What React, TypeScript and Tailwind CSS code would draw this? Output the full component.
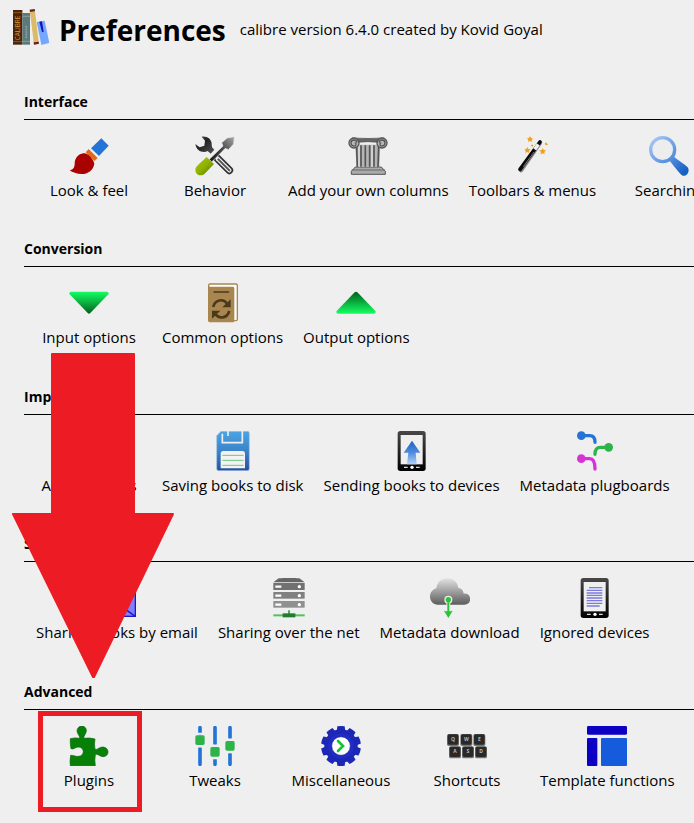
import type { ReactNode } from "react";

function Icon({ children }: { children: ReactNode }) {
  return (
    <svg viewBox="0 0 120 120" className="size-10 shrink-0" aria-hidden="true">
      {children}
    </svg>
  );
}

const lookIcon = (
  <Icon>
    <path d="M97 7 119 29 90 60 66 37Z" fill="#2474d8" />
    <path d="M59 39 86 66 76 75 50 49Z" fill="#e2691c" />
    <path d="M43 52C54 48 73 68 76 83C73 103 56 114 38 114C24 114 10 109 2 103C13 100 16 96 17 84C17 66 29 54 43 52Z" fill="#a90000" />
  </Icon>
);

const behaviorIcon = (
  <Icon>
    <defs>
      <linearGradient id="wrench" x1="0" y1="0" x2="1" y2="1">
        <stop offset="0" stopColor="#666" />
        <stop offset=".4" stopColor="#222" />
        <stop offset="1" stopColor="#555" />
      </linearGradient>
      <linearGradient id="blade" x1="1" y1="0" x2="0" y2="1">
        <stop offset="0" stopColor="#aaa" />
        <stop offset=".5" stopColor="#444" />
        <stop offset="1" stopColor="#111" />
      </linearGradient>
      <linearGradient id="grip" x1="0" y1="0" x2="1" y2="1">
        <stop offset="0" stopColor="#a3cc00" />
        <stop offset=".5" stopColor="#8fb200" />
        <stop offset="1" stopColor="#586f00" />
      </linearGradient>
    </defs>
    <path d="M20 2C36-1 51 10 50 25L51 34L58 41L47 53L38 45C26 52 4 47 1 24L14 34L28 29L30 14Z" fill="url(#wrench)" />
    <path d="M66 66 103 103" stroke="#333" strokeWidth="23" strokeLinecap="round" />
    <path d="M68 68 103 103" stroke="#efefef" strokeWidth="13" strokeLinecap="round" />
    <path d="M70 70 103 103" stroke="#555" strokeWidth="6" strokeLinecap="round" />
    <path d="M43 70 84 30 80 20 96 6 118 2 116 24 100 41 91 37 50 78Z" fill="url(#blade)" stroke="#efefef" strokeWidth="2" />
    <path d="M35 63 57 84 29 113C18 123-3 117 2 96C4 91 20 77 35 63Z" fill="url(#grip)" />
  </Icon>
);

const columnIcon = (
  <Icon>
    <path d="M10 106 22 93H100L112 106V115H10Z" fill="#aaa" stroke="#555" strokeWidth="3" />
    <path d="M11 102H111" stroke="#666" strokeWidth="3" />
    <path d="M21 26H97L94 93H26Z" fill="#b5b5b5" />
    <path d="M26 30 28 93M39 28V92M52 28V92M65 28V92M78 28V92M92 30 90 93" stroke="#555" strokeWidth="5" />
    <path d="M33 28V92M72 28V92" stroke="#eee" strokeWidth="3" />
    <path d="M12 6Q60 9 109 6L106 20Q60 14 13 20Z" fill="#666" stroke="#444" strokeWidth="2" />
    <circle cx="18" cy="21" r="15" fill="#bbb" stroke="#555" strokeWidth="4" />
    <circle cx="102" cy="21" r="15" fill="#bbb" stroke="#555" strokeWidth="4" />
    <path d="M27 20A9 9 0 1 0 18 30A5 5 0 0 0 20 20M93 20A9 9 0 1 1 102 30A5 5 0 0 1 100 20" fill="none" stroke="#555" strokeWidth="4" />
  </Icon>
);

const wandIcon = (
  <Icon>
    <path d="M27 103 84 20" stroke="#888" strokeWidth="13" strokeLinecap="round" />
    <path d="M24 100 84 18" stroke="#0a0a0a" strokeWidth="11" strokeLinecap="round" />
    <path d="M68 40 79 25" stroke="#eee" strokeWidth="11" />
    <path d="M34 92 66 48" stroke="#777" strokeWidth="3" />
    <g fill="#f0a020">
      <path d="M54 0 57 6 63 7 59 12 60 18 54 15 48 18 49 12 45 7 51 6Z" />
      <path d="M46 33 49 39 56 40 51 45 52 51 46 48 40 51 41 45 37 40 43 39Z" />
      <path d="M92 36 95 42 102 43 97 48 98 55 92 52 85 55 87 48 82 43 89 42Z" />
      <path d="M103 19 105 23 108 25 104 28 101 27 98 23Z" />
      <path d="M61 25 64 29 61 32 56 29Z" />
    </g>
  </Icon>
);

const searchIcon = (
  <Icon>
    <defs>
      <linearGradient id="lens" gradientUnits="userSpaceOnUse" x1="10" y1="10" x2="105" y2="110">
        <stop offset="0" stopColor="#a5c5f4" />
        <stop offset=".5" stopColor="#5f97e2" />
        <stop offset="1" stopColor="#1560c4" />
      </linearGradient>
    </defs>
    <path d="M62 75 75 62C88 73 104 82 116 94C124 106 114 121 101 119C94 116 76 91 62 75Z" fill="url(#lens)" />
    <circle cx="41" cy="41" r="36" fill="#ededed" stroke="url(#lens)" strokeWidth="10" />
  </Icon>
);

const inputIcon = (
  <Icon>
    <defs>
      <linearGradient id="down" x1="0" y1="0" x2="0" y2="1">
        <stop offset="0" stopColor="#14ff62" />
        <stop offset="1" stopColor="#00601c" />
      </linearGradient>
    </defs>
    <path d="M5 26H115Q121 29 118 34L64 90Q60 94 56 90L2 34Q-1 29 5 26Z" fill="url(#down)" />
  </Icon>
);

const outputIcon = (
  <Icon>
    <defs>
      <linearGradient id="up" x1="0" y1="0" x2="0" y2="1">
        <stop offset="0" stopColor="#00601c" />
        <stop offset="1" stopColor="#14ff62" />
      </linearGradient>
    </defs>
    <path d="M5 92H115Q121 89 118 84L64 28Q60 24 56 28L2 84Q-1 89 5 92Z" fill="url(#up)" />
  </Icon>
);

const commonIcon = (
  <Icon>
    <rect x="17" y="3" width="86" height="110" rx="4" fill="#fff" stroke="#a9864f" strokeWidth="4" />
    <path d="M15 6Q16 11 22 11H90Q94 11 94 16V113Q94 118 89 118H20Q15 118 15 112Z" fill="#a9864f" />
    <g fill="none" stroke="#4b391b">
      <path d="M33 27H77" strokeWidth="4" strokeLinecap="round" />
      <path d="M31 72C35 49 62 46 72 62M79 84C72 107 48 109 37 93" strokeWidth="8" />
    </g>
    <path d="M83 49V73H58ZM27 83H52L27 107Z" fill="#4b391b" />
  </Icon>
);

const addIcon = (
  <Icon>
    <path d="M20 16H96V106H20Z" fill="#2474d8" />
    <path d="M58 38V84M35 61H81" stroke="#fff" strokeWidth="10" />
  </Icon>
);

const diskIcon = (
  <Icon>
    <defs>
      <linearGradient id="disk" x1="0" y1="0" x2="0" y2="1">
        <stop offset="0" stopColor="#4ba5e5" />
        <stop offset=".5" stopColor="#3b83c9" />
        <stop offset="1" stopColor="#274f9e" />
      </linearGradient>
    </defs>
    <path d="M24 1H104Q109 1 109 6V113Q109 119 103 119H17Q11 119 11 113V14Z" fill="url(#disk)" stroke="#a6c8e8" strokeWidth="2" />
    <path d="M28 8V35H88V0" fill="none" stroke="#efefef" strokeWidth="5" />
    <path d="M45 0V15" stroke="#efefef" strokeWidth="5" />
    <path d="M23 68Q23 60 31 60H88Q96 60 96 68V112H23Z" fill="#f3f3f3" />
    <path d="M28 73H92M28 88H92M28 103H92" stroke="#70c583" strokeWidth="3" />
  </Icon>
);

function DeviceBody({ id }: { id: string }) {
  return (
    <>
      <defs>
        <linearGradient id={id} x1="0" y1="0" x2="0" y2="1">
          <stop offset="0" stopColor="#484848" />
          <stop offset="1" stopColor="#000" />
        </linearGradient>
      </defs>
      <rect x="17" y="0" width="84" height="120" rx="8" fill={`url(#${id})`} />
      <rect x="26" y="12" width="66" height="88" fill="#efefef" />
      <path d="M36 109H47M72 109H83" stroke="#ddd" strokeWidth="4" />
      <circle cx="60" cy="109" r="5" fill="#fff" />
    </>
  );
}

const sendIcon = (
  <Icon>
    <DeviceBody id="sendBody" />
    <defs>
      <linearGradient id="sendArrow" x1="0" y1="0" x2="0" y2="1">
        <stop offset="0" stopColor="#1d61c5" />
        <stop offset=".5" stopColor="#4e8ade" />
        <stop offset="1" stopColor="#b4d2fb" />
      </linearGradient>
    </defs>
    <path d="M60 29 85 65H71L74 100H45L49 65H35Z" fill="url(#sendArrow)" />
  </Icon>
);

const plugboardIcon = (
  <Icon>
    <g fill="none" strokeWidth="10" strokeLinecap="round">
      <path d="M19 14H44Q60 14 60 34" stroke="#2474d8" />
      <path d="M101 49H76Q60 49 60 70" stroke="#2cb34a" />
      <path d="M19 83H44Q60 83 60 114" stroke="#d633d6" />
    </g>
    <circle cx="19" cy="14" r="13" fill="#2474d8" />
    <circle cx="101" cy="49" r="13" fill="#2cb34a" />
    <circle cx="19" cy="83" r="13" fill="#d633d6" />
  </Icon>
);

const emailIcon = (
  <Icon>
    <rect x="4" y="26" width="111" height="89" fill="#8080ff" stroke="#2115c8" strokeWidth="4" />
    <path d="M4 26 60 76 115 26M4 115 46 66M115 115 74 86" fill="none" stroke="#2115c8" strokeWidth="4" />
  </Icon>
);

const serverIcon = (
  <Icon>
    <path d="M13 13 29 1Q60-2 91 1L107 13Z" fill="#666" />
    <rect x="13" y="15" width="94" height="21" fill="#717171" />
    <rect x="13" y="42" width="94" height="20" fill="#808080" />
    <rect x="13" y="69" width="94" height="20" fill="#909090" />
    <path d="M19 26H37M19 53H37M19 80H37" stroke="#fff" strokeWidth="7" />
    <g fill="#fff">
      <circle cx="91" cy="26" r="5" />
      <circle cx="91" cy="53" r="5" />
      <circle cx="91" cy="80" r="5" />
    </g>
    <path d="M13 112H107" stroke="#4cc45c" strokeWidth="6" />
    <path d="M60 97V110" stroke="#4cae55" strokeWidth="6" />
    <path d="M41 106H79V118H41Z" fill="#237a30" />
  </Icon>
);

const cloudIcon = (
  <Icon>
    <defs>
      <linearGradient id="cloud" x1="0" y1="0" x2="0" y2="1">
        <stop offset="0" stopColor="#e2e2e2" />
        <stop offset="1" stopColor="#5c5c5c" />
      </linearGradient>
    </defs>
    <path d="M24 80C-5 80-9 39 19 31C23-9 81-9 85 30C95 31 100 38 101 47C126 44 128 80 103 80Z" fill="url(#cloud)" />
    <circle cx="55" cy="65" r="12" fill="#eee" />
    <path d="M55 66V104" stroke="#eee" strokeWidth="11" />
    <circle cx="55" cy="65" r="8" fill="#2cc23b" />
    <path d="M55 65V102" stroke="#2cc23b" strokeWidth="6" />
    <path d="M42 98Q55 102 68 98L55 120Z" fill="#2cc23b" />
  </Icon>
);

const ignoredIcon = (
  <Icon>
    <DeviceBody id="ignoredBody" />
    <g stroke="#7b7be2" strokeWidth="4">
      <path d="M42 29H82M35 37H82M35 45H82M35 52H82M35 60H82M35 68H82M35 76H82M35 84H74" />
    </g>
  </Icon>
);

const pluginIcon = (
  <Icon>
    <path
      d="M4 38Q18 34 32 37C34 31 25 25 24 15C25-5 53-4 52 15C51 25 42 31 45 37Q61 34 78 39Q75 54 78 70C85 73 91 62 102 63C122 65 122 91 102 92C92 92 86 81 79 86Q76 103 79 119H4Q2 105 5 88C13 87 20 93 29 91C48 89 47 64 29 63C18 63 14 72 6 68Q3 54 4 38Z"
      fill="#078007"
      stroke="#05620a"
      strokeWidth="2"
    />
  </Icon>
);

const tweaksIcon = (
  <Icon>
    <path d="M15 5V20M15 67V115M60 5V53M60 101V115M105 5V36M105 84V115" stroke="#2474d8" strokeWidth="11" strokeLinecap="round" />
    <g fill="#2cb34a">
      <rect x="1" y="28" width="28" height="29" rx="5" />
      <rect x="46" y="63" width="28" height="29" rx="5" />
      <rect x="91" y="45" width="28" height="29" rx="5" />
    </g>
    <path d="M8 23H22M8 62H22M53 58H67M53 97H67M98 40H112M98 79H112" stroke="#efefef" strokeWidth="5" />
  </Icon>
);

const teeth = [0, 36, 72, 108, 144, 180, 216, 252, 288, 324];

const miscIcon = (
  <Icon>
    {teeth.map((angle) => (
      <path key={angle} d="M47 18 49 1Q60-1 71 1L73 18Z" fill="#1c27b5" transform={`rotate(${angle} 60 60)`} />
    ))}
    <circle cx="60" cy="60" r="50" fill="#1c27b5" />
    <circle cx="60" cy="60" r="38" fill="#1f2cc6" />
    <circle cx="60" cy="60" r="28" fill="#fff" stroke="#17209a" strokeWidth="2" />
    <path d="M51 45 66 60 51 75" fill="none" stroke="#16c534" strokeWidth="8" strokeLinecap="round" />
  </Icon>
);

const keys = [
  { letter: "Q", x: 0, y: 24 },
  { letter: "W", x: 40, y: 24 },
  { letter: "E", x: 79, y: 24 },
  { letter: "A", x: 6, y: 61 },
  { letter: "S", x: 45, y: 61 },
  { letter: "D", x: 84, y: 61 },
];

const shortcutsIcon = (
  <Icon>
    {keys.map(({ letter, x, y }) => (
      <g key={letter}>
        <rect x={x} y={y} width="36" height="36" rx="5" fill="#777" />
        <rect x={x + 2} y={y + 1} width="32" height="31" rx="5" fill="#292929" />
        <text x={x + 18} y={y + 21} textAnchor="middle" fontSize="15" fontWeight="700" fill="#bbb">
          {letter}
        </text>
      </g>
    ))}
  </Icon>
);

const templateIcon = (
  <Icon>
    <rect x="0" y="0" width="120" height="26" rx="4" fill="#0c00c4" />
    <rect x="0" y="36" width="31" height="84" rx="3" fill="#0c00c4" />
    <rect x="42" y="36" width="78" height="84" rx="3" fill="#155bdc" />
  </Icon>
);

type Item = { label: string; icon: ReactNode; marked?: boolean };

const sections: { title: string; items: Item[] }[] = [
  {
    title: "Interface",
    items: [
      { label: "Look & feel", icon: lookIcon },
      { label: "Behavior", icon: behaviorIcon },
      { label: "Add your own columns", icon: columnIcon },
      { label: "Toolbars & menus", icon: wandIcon },
      { label: "Searching", icon: searchIcon },
    ],
  },
  {
    title: "Conversion",
    items: [
      { label: "Input options", icon: inputIcon },
      { label: "Common options", icon: commonIcon },
      { label: "Output options", icon: outputIcon },
    ],
  },
  {
    title: "Import/export",
    items: [
      { label: "Adding books", icon: addIcon },
      { label: "Saving books to disk", icon: diskIcon },
      { label: "Sending books to devices", icon: sendIcon },
      { label: "Metadata plugboards", icon: plugboardIcon },
    ],
  },
  {
    title: "Sharing",
    items: [
      { label: "Sharing books by email", icon: emailIcon },
      { label: "Sharing over the net", icon: serverIcon },
      { label: "Metadata download", icon: cloudIcon },
      { label: "Ignored devices", icon: ignoredIcon },
    ],
  },
  {
    title: "Advanced",
    items: [
      { label: "Plugins", icon: pluginIcon, marked: true },
      { label: "Tweaks", icon: tweaksIcon },
      { label: "Miscellaneous", icon: miscIcon },
      { label: "Shortcuts", icon: shortcutsIcon },
      { label: "Template functions", icon: templateIcon },
    ],
  },
];

function Logo() {
  return (
    <svg viewBox="0 0 108 108" className="size-9 shrink-0" role="img" aria-label="calibre">
      <rect x="0" y="3" width="28" height="104" fill="#4b2408" />
      <path d="M0 11H28M0 98H28" stroke="#8a5a1c" strokeWidth="3" />
      <text transform="translate(21 94) rotate(-90)" fontSize="19" fill="#d89a3c">
        CALIBRE
      </text>
      <rect x="28" y="12" width="23" height="95" fill="#5c7a7c" />
      <path d="M28 22H51M28 97H51" stroke="#86a0a1" strokeWidth="3" />
      <path d="M40 50V90" stroke="#8fa9aa" strokeWidth="5" strokeDasharray="3 2" />
      <path d="M50 2 65 0 78 104 63 107Z" fill="#dcbb68" />
      <path d="M50 2 65 0 66 7 51 9ZM62 100 77 98 78 104 63 107Z" fill="#6b2030" />
      <path d="M71 39 95 35 109 102 85 108Z" fill="#74a7ff" />
      <path d="M79 38 87 37 92 68 87 70Z" fill="#1616b8" />
    </svg>
  );
}

export default function App() {
  return (
    <main className="relative min-h-screen overflow-hidden bg-[#efefef] font-['Open_Sans','Noto_Sans',sans-serif] text-[15px] text-black">
      <header className="flex h-[90px] items-start gap-2.5 pt-[9px] pl-[13px] whitespace-nowrap">
        <Logo />
        <h1 className="text-[28px] leading-[42px] font-bold">Preferences</h1>
        <p className="pl-1 leading-10">calibre version 6.4.0 created by Kovid Goyal</p>
      </header>

      {sections.map((section) => (
        <section key={section.title} className="pl-6 odd:pb-[38px] even:pb-[37px] last:pb-0">
          <h2 className="border-b border-black pb-[5px] text-[14px] leading-6 font-bold">{section.title}</h2>
          <div className="flex pt-4 pl-[2px]">
            {section.items.map((item) => (
              <button
                key={item.label}
                type="button"
                className="relative flex min-w-[126px] shrink-0 flex-col items-center gap-1 px-2.5 leading-5 whitespace-nowrap"
              >
                {item.icon}
                <span>{item.label}</span>
                {item.marked && <span className="absolute -top-[15px] left-3 h-[101px] w-[104px] border-5 border-[#ed1c24]" />}
              </button>
            ))}
          </div>
        </section>
      ))}

      <svg
        viewBox="0 0 162 326"
        className="pointer-events-none absolute top-[353px] left-3 h-[326px] w-[162px]"
        aria-hidden="true"
      >
        <path
          d="M40 1H122V161H161L82 324H81L1 161H40Z"
          fill="#ed1c24"
          stroke="#ed1c24"
          strokeWidth="2"
          strokeLinejoin="round"
        />
      </svg>
    </main>
  );
}
